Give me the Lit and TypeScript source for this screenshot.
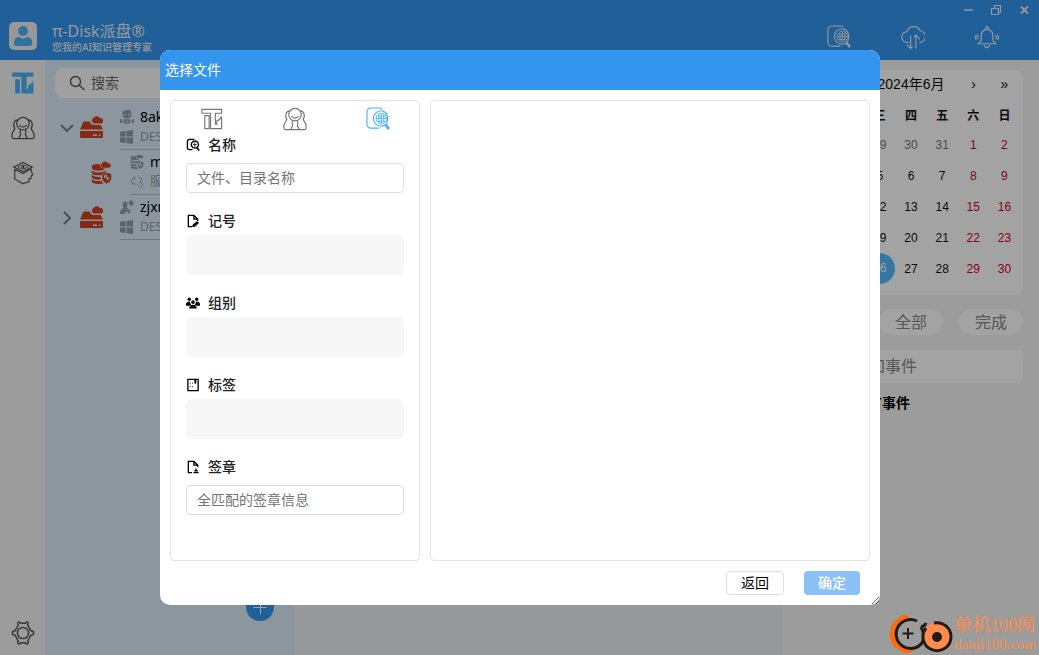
import { LitElement, html, css, svg } from "lit";
import { customElement, state } from "lit/decorators.js";
import { classMap } from "lit/directives/class-map.js";

const searchFile = svg`
  <path d="M17 2Q16 1 14.500 1H5a4 4 0 0 0-4 4v13a4 4 0 0 0 4 4h9" />
  <path d="M17 4a8 8 0 1 0 4 14M17 4a8 8 0 0 1 5.500 9q-.5 3-1.500 5" />
  <path d="M16 6.500a5.500 5.500 0 1 0 .1 0M16 7v10.500M10.500 12h11M12 9.500h8M12 15h8M13.500 8v8M18.500 8v8" stroke-width=".9" />
  <path d="M20.500 18.500l3.500 4.500" stroke-width="2.800" />`;

const people = svg`
  <path d="M12.500 1.500a6.500 6.500 0 1 1 0 13a6.500 6.500 0 1 1 0-13" />
  <path d="M8.500 9.500q4 4 8 0" />
  <path d="M7 4C3 4.500 1.500 9 4 13L1 18.500V22q0 1.500 1.500 1.500H8l2-4q-1-2 0-5.500M18 4C22 4.500 23.500 9 21 13L24 18.500V22q0 1.500-1.500 1.500H17l-2-4q1-2 0-5.500M8 23.500h9" />`;

const piShape = svg`
  <path d="M2 2.500h20.500v4H16V18h1.500v-3.500q3-.5 5-4.500v12.500H11V6.500H2zM5 9h4.500v13.500H5z" />`;

const pageOutline = svg`<path d="M6.500 13.500H2.500V1.500h6l4 4v2M8.500 1.500v4h4" />`;

const icons = {
  pi: piShape,
  people,
  searchFile,
  searchSmall: svg`
    <path d="M9 1.500H3.500a2 2 0 0 0-2 2v7a2 2 0 0 0 2 2H7" />
    <path d="M9.500 3.200a3.800 3.800 0 1 0 .1 0" /><path d="M9.500 4.500v5M7.500 7h4" stroke-width=".8" />
    <path d="M12 10.500l2 3" stroke-width="1.800" />`,
  scholar: svg`
    <path d="M3 6.500l10-5l10 5l-10 5z" /><path d="M7.500 6.500q5.500-4 11 0q-5.500 4-11 0z" stroke-width=".9" /><circle cx="13" cy="6.500" r="1" />
    <path d="M4 9v10.500l8.500 5l7-2v-3.500h2l.5-3l1.500-1l-1.500-4V8.500M4 9l9 4.500l9-5" />`,
  cog: svg`
    <path d="M8.500 2.500q1.500-2 3 .5h5q1.500-2.500 3-.5q1 1-.5 2.500l3.500 6q3 0 3 2.500t-3 2.500l-3.500 6q1.500 1.500.5 2.500q-1.500 2-3-.5h-5q-1.500 2.500-3 .5q-1-1 .5-2.500l-3.500-6q-3 0-3-2.500t3-2.500l3.500-6q-1.500-1.500-.5-2.500z" />
    <circle cx="14" cy="13.500" r="6" />`,
  cloudSync: svg`
    <path d="M8.500 18H6.500a5.500 5.500 0 0 1-.5-11a7.500 7.500 0 0 1 14-1a6 6 0 0 1-1 12M6 20.500l4 4V11M10 24.500l2-2M15.500 24.500V10.500l-2 2.500M15.500 10.500l4 4.500" />`,
  bell: svg`
    <path d="M3.500 19.500q3-2 3-5V10.500a6 6 0 0 1 12 0v4q0 3 3 5zM11 4.800V3q1.500-3 3 0v1.800M9.500 21q3 5 6 0" />
    <path d="M3.500 10.500q-1.500 2 0 4M1.500 10q-1.800 3 0 5.500M21.500 10.500q1.500 2 0 4M23.500 10q1.800 3 0 5.500" />`,
  lens: svg`<circle cx="6.500" cy="6.500" r="5" /><path d="M10 10l5.500 5" />`,
  down: svg`<path d="M1 1l6 6l6-6" />`,
  right: svg`<path d="M1 1l6 6l-6 6" />`,
  disk: svg`
    <path d="M4 5.500h6q.5 3.500 4 3.500h6.500L23 13.500H0L3 6.500z" />
    <path fill-rule="evenodd" d="M1 15h21q1 0 1 1v5q0 1-1 1H1q-1 0-1-1v-5q0-1 1-1zM13 18.500v1.500h4v-1.500zM19 18.500v1.500h1.500v-1.500z" />
    <path d="M14 7.500a3 3 0 0 1-.5-5.500a4 4 0 0 1 6.500 0a2.800 2.800 0 0 1 1 5.500z" />`,
  database: svg`
    <path d="M1 6.500q0-3 7-3h2q0 5 6 5q-2 2.500-8 2.500q-7 0-7-4.500zM1 10.500q3 3 8 2.500q5 0 7.500-2v2q-1 .8-3 1l-2 2q-9 1-10.500-2.500zM1 15.500q3 3 10 2.500v3q-9 .5-10-2.500zM1 20.500q3 2.500 11 2q1 2 2.500 3q-13 1.500-13.500-2.500z" />
    <path d="M13 7.500a2.800 2.800 0 0 1-.5-5a4 4 0 0 1 7 0a2.500 2.500 0 0 1 1 5z" />
    <path fill-rule="evenodd" d="M13 15l5-2l5 2v5q-1 4-5 5.500q-4-1.500-5-5.500zM15 16.500v3l3-1v4q2.500-1.500 3-4.500l-3 .5v-3.500z" />`,
  robot: svg`
    <path fill-rule="evenodd" d="M2 1l2 .5L6 0h5l1 3v4q-1 2-4.500 2T3 7V3zM4.500 4.500v1.500h2v-1.500zM8.500 4.500v1.500h2v-1.500zM0 10h2.500v4H0zM12.500 10H15v4h-2.500zM4 10h7v4.500H4zM6 12v1h3v-1z" />`,
  windows: svg`<path d="M0 2l6-1v6H0zM7 1l7-1v7H7zM0 8h6v6l-6-1zM7 8h7v7l-7-1z" />`,
  userOff: svg`
    <path d="M3 3q2.500-3 5 0v3q-.5 2-1 2.500l4 2.500v3H8.500L7 11.500L4.500 15H0v-3l3.500-3.500Q3 7 3 5z" />
    <path d="M12 0l.8 1.200h1.700L14 2.800l1 1.200l-1.500.8V6.500L12 6l-1.500.5V4.800L9 4l1-1.200l-.5-1.600h1.700z" />`,
  serviceLink: svg`<path d="M6 4H3.500Q1 4.500 1.500 7.500Q2 10 5.500 9.500M3.500 4Q4 2 6 2M8.500 3q3-1 4 1t-2 3.500l3 2.500q0 3-3 3.500M7.500 9.500l2.500 2" />`,
  group: svg`
    <circle cx="3.500" cy="3.500" r="1.800" /><circle cx="11.500" cy="3.500" r="1.800" /><circle cx="7.500" cy="6.500" r="2" />
    <path d="M0 9.500Q0 6 4 6q.5 2.500 1.500 3L4 10.500H0zM15 9.500Q15 6 11 6q-.5 2.500-1.500 3l1.500 1.500h4zM3.500 13.500q0-4 4-4t4 4z" />`,
  note: svg`${pageOutline}<path d="M7 13.500l.5-2l4.500-3.500l1.500 1.500l-4 4z" fill="currentColor" stroke-width=".8" />`,
  book: svg`<path d="M2 1.500h11v12H2z" /><path d="M10 1v5" stroke-width="2" /><path d="M4.500 5v1M4.500 9v1M7 5v1M7 9v1" stroke-width="1" />`,
  stamp: svg`${pageOutline}<path d="M8 13.500h5.500M10.700 9v3M9 11.500h3.500" />`,
};

type IconName = keyof typeof icons;

@customElement("ui-icon")
class UiIcon extends LitElement {
  static properties = { name: {}, box: {}, filled: { type: Boolean } };
  declare name: IconName;
  declare box: string;
  declare filled: boolean;

  static styles = css`
    :host { display: block; flex: none; }
    svg { display: block; width: 100%; height: 100%; fill: none; stroke: currentColor; stroke-width: var(--line, 1); }
    .filled { fill: currentColor; stroke: none; }
  `;

  render() {
    return html`<svg class=${classMap({ filled: this.filled })} viewBox=${this.box} aria-hidden="true">${icons[this.name]}</svg>`;
  }
}

const weekdays = ["一", "二", "三", "四", "五", "六", "日"];
const weeks = [
  [27, 28, 29, 30, 31, 1, 2],
  [3, 4, 5, 6, 7, 8, 9],
  [10, 11, 12, 13, 14, 15, 16],
  [17, 18, 19, 20, 21, 22, 23],
  [24, 25, 26, 27, 28, 29, 30],
];

@customElement("month-calendar")
class MonthCalendar extends LitElement {
  static styles = css`
    :host { display: block; background: #fff; border-radius: 6px; padding: 0 3px 11px; color: #111; font: 12px "Liberation Sans", "Noto Sans CJK SC", sans-serif; }
    .bar { display: grid; grid-template-columns: 31px 31px 1fr 31px 31px; height: 28px; margin-bottom: 2px; align-items: center; }
    .bar button { border: 0; background: none; padding: 0; font: 14px "Liberation Sans", sans-serif; color: inherit; }
    .month { font-size: 14px; line-height: 16px; text-align: center; }
    table { border-collapse: collapse; table-layout: fixed; width: 100%; }
    th, td { height: 31px; padding: 0; text-align: center; }
    th { height: 29px; font-weight: 700; }
    .weekend { color: #d4001a; }
    .outside { color: #757575; }
    .today span { display: block; line-height: 31px; border-radius: 50%; background: #54baff; color: #fff; }
  `;

  render() {
    return html`
      <div class="bar">
        <button aria-label="上一年">«</button><button aria-label="上个月">‹</button>
        <span class="month">2024年6月</span>
        <button aria-label="下个月">›</button><button aria-label="下一年">»</button>
      </div>
      <table>
        <thead><tr>${weekdays.map((d) => html`<th>${d}</th>`)}</tr></thead>
        <tbody>
          ${weeks.map((week, w) => html`<tr>${week.map((day, d) => html`
            <td class=${classMap({ outside: w === 0 && d < 5, weekend: (w > 0 || d > 4) && d > 4, today: w === 4 && d === 2 })}><span>${day}</span></td>`)}</tr>`)}
        </tbody>
      </table>`;
  }
}

@customElement("file-dialog")
class FileDialog extends LitElement {
  @state() private tab = 2;

  static styles = css`
    :host { display: flex; flex-direction: column; flex: 1; min-width: 0; box-sizing: border-box; background: #fff; border-radius: 10px; overflow: hidden; resize: both; color: #222; }
    header { flex: none; height: 40px; display: flex; align-items: center; padding: 0 5px; background: #3495ee; color: #fff; }
    h2 { margin: 0; font-size: 14px; font-weight: 400; }
    .body { flex: 1; min-height: 0; display: flex; gap: 10px; padding: 10px 10px 0; }
    .panel { border: 1px solid #e4e4e4; border-radius: 4px; box-sizing: border-box; }
    .filters { width: 250px; flex: none; }
    .results { flex: 1; }
    .tabs { display: grid; grid-template-columns: repeat(3, 1fr); height: 30px; }
    .tabs button { border: 0; padding: 6px 0 0; background: none; display: grid; place-items: center; color: #777; }
    .tabs .on { color: #42b4ff; }
    .tabs ui-icon { width: 24px; height: 24px; --line: 1.2; }
    form { padding: 0 15px; display: grid; gap: 14px; }
    label, .caption { display: flex; align-items: center; gap: 8px; height: 28px; font-size: 14px; font-weight: 500; }
    .caption ui-icon, label ui-icon { width: 14px; height: 14px; color: #000; --line: 1.4; }
    input { display: block; width: 100%; height: 30px; margin-top: 4px; box-sizing: border-box; border: 1px solid #e0e0e0; border-radius: 4px; padding: 0 10px 2px; font: inherit; font-size: 14px; background: #fff; }
    input::placeholder { color: #757575; opacity: 1; }
    .tray { height: 40px; border-radius: 6px; background: #f7f7f7; }
    footer { flex: none; display: flex; justify-content: flex-end; gap: 20px; padding: 10px 20px; }
    footer button { height: 24px; padding: 0 14px; border: 0; border-radius: 4px; font: inherit; font-size: 14px; line-height: 22px; }
    .back { border: 1px solid #e0e0e0; background: #fff; color: #000; }
    .ok { background: #8ac2f8; color: #fff; font-weight: 500; }
  `;

  private tray(icon: IconName, text: string, filled = false) {
    return html`<div role="group" aria-label=${text}>
      <div class="caption"><ui-icon name=${icon} box="0 0 15 15" ?filled=${filled}></ui-icon>${text}</div>
      <div class="tray"></div>
    </div>`;
  }

  render() {
    const tabs: [IconName, string][] = [["pi", "派盘"], ["people", "好友"], ["searchFile", "搜索"]];
    return html`
      <header><h2>选择文件</h2></header>
      <div class="body">
        <section class="panel filters">
          <div class="tabs">
            ${tabs.map(([icon, name], i) => html`
              <button aria-label=${name} class=${classMap({ on: this.tab === i })} @click=${() => (this.tab = i)}>
                <ui-icon name=${icon} box="0 0 25 25"></ui-icon>
              </button>`)}
          </div>
          <form>
            <div>
              <label for="name"><ui-icon name="searchSmall" box="0 0 15 15"></ui-icon>名称</label>
              <input id="name" placeholder="文件、目录名称" />
            </div>
            ${this.tray("note", "记号")}
            ${this.tray("group", "组别", true)}
            ${this.tray("book", "标签")}
            <div>
              <label for="seal"><ui-icon name="stamp" box="0 0 15 15"></ui-icon>签章</label>
              <input id="seal" placeholder="全匹配的签章信息" />
            </div>
          </form>
        </section>
        <section class="panel results"></section>
      </div>
      <footer><button class="back">返回</button><button class="ok">确定</button></footer>`;
  }
}

interface Device { child?: boolean; open?: boolean; name: string; host: string; kind: IconName; system: IconName }

const devices: Device[] = [
  { open: true, name: "8ak", host: "DESKTOP", kind: "robot", system: "windows" },
  { child: true, name: "m", host: "服务", kind: "database", system: "serviceLink" },
  { name: "zjxm", host: "DESKTOP", kind: "userOff", system: "windows" },
];

@customElement("app-root")
class AppRoot extends LitElement {
  static styles = css`
    :host { display: flex; flex-direction: column; height: 100vh; position: relative; overflow: hidden; font-family: "Noto Sans", "Noto Sans CJK SC", sans-serif; font-size: 14px; line-height: 20px; color: #000; }
    button { font: inherit; border: 0; padding: 0; background: none; color: inherit; }
    .top { flex: none; height: 60px; box-sizing: border-box; display: flex; align-items: flex-start; background: #3495ee; color: #e8eef4; padding-left: 9px; }
    .avatar { width: 28px; height: 28px; margin: 22px 15px 0 0; border-radius: 5px; background: #eee; }
    .avatar svg, .win svg { display: block; }
    .brand { flex: 1; padding-top: 22px; }
    h1 { margin: 0; font-size: 16px; font-weight: 400; line-height: 18px; }
    .brand p { margin: 0; font-size: 10px; line-height: 14px; font-weight: 500; }
    .tools { display: flex; flex-direction: column; align-items: flex-end; }
    .win { display: flex; height: 20px; padding-right: 9px; gap: 16px; align-items: center; }
    .quick { display: flex; gap: 50px; padding: 5px 40px 0 0; }
    .quick ui-icon { width: 24px; height: 24px; --line: 1.2; }
    .main { flex: 1; display: flex; min-height: 0; }
    .rail { width: 45px; flex: none; background: #f5f5f5; display: flex; flex-direction: column; align-items: center; padding: 11px 0 9px; box-sizing: border-box; gap: 21px; color: #555; }
    .rail ui-icon { width: 24px; height: 24px; --line: 1.3; }
    .rail .home { color: #49b2f7; }
    .rail .settings { margin-top: auto; }
    .rail .settings ui-icon { width: 26px; height: 26px; --line: 1.6; }
    .tree { width: 250px; flex: none; box-sizing: border-box; background: #d9ebf9; padding: 8px 10px 0; position: relative; }
    .search { display: flex; align-items: center; gap: 6px; height: 30px; background: #fafafa; border-radius: 8px; padding-left: 14px; margin-bottom: 7px; }
    .search ui-icon { width: 16px; height: 16px; color: #555; --line: 1.4; }
    .search input { border: 0; background: none; min-width: 0; flex: 1; padding: 0; font: inherit; }
    .search input::placeholder { color: #666; opacity: 1; }
    .device { display: flex; align-items: center; height: 45px; padding-left: 5px; }
    .child { padding-left: 15px; }
    .fold { width: 14px; height: 14px; display: grid; place-items: center; color: #777; --line: 1.8; margin-right: 6px; }
    .fold ui-icon { width: 14px; height: 8px; }
    .fold .side { width: 8px; height: 14px; }
    .drive { width: 23px; height: 23px; color: #cf4320; margin-right: 17px; }
    .lines { flex: 1; height: 44px; border-bottom: 1px solid #aebdc9; }
    .line { display: flex; align-items: center; gap: 6px; height: 20px; }
    .line:first-child { padding-top: 2px; }
    .line ui-icon { width: 14px; height: 14px; color: #909ba5; }
    .host { color: #909ba5; font-size: 12px; }
    .add { position: absolute; left: 201px; bottom: 34px; width: 28px; height: 28px; border-radius: 50%; background: #3495ee; color: #fff; }
    .add svg { display: block; }
    .content { flex: 1; background: #eef0f2; }
    .agenda { width: 256px; flex: none; box-sizing: border-box; background: #f4f4f4; padding: 10px 16px; }
    .states { display: grid; grid-template-columns: repeat(3, 1fr); gap: 16px; margin: 14px 0 15px; }
    .states button { height: 26px; border-radius: 13px; background: #fff; color: #888; font-size: 16px; }
    .event { display: block; width: 100%; height: 33px; box-sizing: border-box; border: 0; border-radius: 5px; background: #fff; padding: 0 54px 2px; font: inherit; font-size: 16px; }
    .event::placeholder { color: #888; opacity: 1; }
    h3 { margin: 10px 55px; font-size: 14px; font-weight: 700; }
    .shade { position: absolute; inset: 0; display: flex; padding: 50px 159px 50px 160px; background: rgba(0, 0, 0, 0.36); }
    .mark { position: absolute; right: 3px; bottom: 0; display: flex; align-items: center; gap: 1px; color: #f88c50; font-family: "Liberation Serif", "Noto Sans CJK SC", serif; }
    .mark p { margin: 0; font-size: 18px; line-height: 20px; }
    .mark .site { font-size: 15px; line-height: 18px; }
  `;

  private device(d: Device) {
    return html`<div class=${classMap({ device: true, child: !!d.child })}>
      ${d.child ? html`<span class="fold"></span>` : html`<button class="fold" aria-label="展开">
        ${d.open ? html`<ui-icon name="down" box="0 0 14 8"></ui-icon>` : html`<ui-icon class="side" name="right" box="0 0 8 14"></ui-icon>`}
      </button>`}
      <ui-icon class="drive" name=${d.child ? "database" : "disk"} box=${d.child ? "0 0 24 26" : "0 0 23 23"} filled></ui-icon>
      <div class="lines">
        <div class="line"><ui-icon name=${d.kind} box=${d.child ? "0 2 24 24" : "0 0 15 15"} filled></ui-icon>${d.name}</div>
        <div class="line host"><ui-icon name=${d.system} box="0 0 15 15" ?filled=${!d.child}></ui-icon>${d.host}</div>
      </div>
    </div>`;
  }

  render() {
    return html`
      <header class="top">
        <div class="avatar"><svg viewBox="0 0 28 28" fill="#49b2f7"><circle cx="14" cy="9" r="5" /><path d="M5 22v-2q0-4.500 5-5l4 2l4-2q5 .5 5 5v2q0 2-2 2H7q-2 0-2-2z" /></svg></div>
        <div class="brand"><h1>π-Disk派盘®</h1><p>您我的AI知识管理专家</p></div>
        <div class="tools">
          <div class="win">
            <button aria-label="最小化"><svg width="12" height="12" stroke="currentColor" stroke-width="1.500"><path d="M2 6h9" /></svg></button>
            <button aria-label="还原"><svg width="12" height="12" fill="none" stroke="currentColor" stroke-width="1.200"><path d="M1.500 4.500h7v6h-7zM4.500 4.500v-3h6v7h-2" /></svg></button>
            <button aria-label="关闭"><svg width="12" height="12" stroke="currentColor" stroke-width="1.800"><path d="M3 2.500l7 7M10 2.500l-7 7" /></svg></button>
          </div>
          <div class="quick">
            <button aria-label="搜索文件"><ui-icon name="searchFile" box="0 0 25 25"></ui-icon></button>
            <button aria-label="同步"><ui-icon name="cloudSync" box="0 0 25 25"></ui-icon></button>
            <button aria-label="通知"><ui-icon name="bell" box="0 0 25 25"></ui-icon></button>
          </div>
        </div>
      </header>
      <div class="main">
        <nav class="rail">
          <button class="home" aria-label="派盘"><ui-icon name="pi" box="1 1 23 23" filled></ui-icon></button>
          <button aria-label="好友"><ui-icon name="people" box="0 0 25 25"></ui-icon></button>
          <button aria-label="知识"><ui-icon name="scholar" box="0 0 26 26"></ui-icon></button>
          <button class="settings" aria-label="设置"><ui-icon name="cog" box="0 0 28 27"></ui-icon></button>
        </nav>
        <aside class="tree">
          <div class="search"><ui-icon name="lens" box="0 0 16 16"></ui-icon><input aria-label="搜索" placeholder="搜索" /></div>
          ${devices.map((d) => this.device(d))}
          <button class="add" aria-label="添加"><svg viewBox="0 0 28 28" stroke="currentColor"><path d="M7.500 14.500h13M14.500 8v13" /></svg></button>
        </aside>
        <main class="content"></main>
        <aside class="agenda">
          <month-calendar></month-calendar>
          <div class="states"><button>待办</button><button>全部</button><button>完成</button></div>
          <input class="event" aria-label="添加事件" placeholder="添加事件" />
          <h3>所有事件</h3>
        </aside>
      </div>
      <div class="shade"><file-dialog role="dialog" aria-label="选择文件"></file-dialog></div>
      <div class="mark">
        <svg width="64" height="42" viewBox="-2 -1 64 42" fill="none">
          <path d="M19 5Q17 1 13 1Q9 1 8 4C-4 10-5 29 8 36q6 4 9 3q5 0 7-4C6 38-4 18 9 8q4-3 10-3z" fill="#ff6a0a" />
          <path d="M26 7A14.500 14.500 0 1 0 31 29Q35 22 30 13M30 13q4-1 5-4" stroke="#231b18" stroke-width="3" />
          <circle cx="46" cy="23" r="14" fill="#ff8c4a" /><path d="M43 9A14 14 0 1 1 35 14" stroke="#231b18" stroke-width="3" />
          <circle cx="46" cy="23" r="5" fill="#231b18" /><path d="M17 14v11M11.500 19.500h11" stroke="#231b18" stroke-width="2" />
        </svg>
        <div><p>单机100网</p><p class="site">danji100.com</p></div>
      </div>`;
  }
}
